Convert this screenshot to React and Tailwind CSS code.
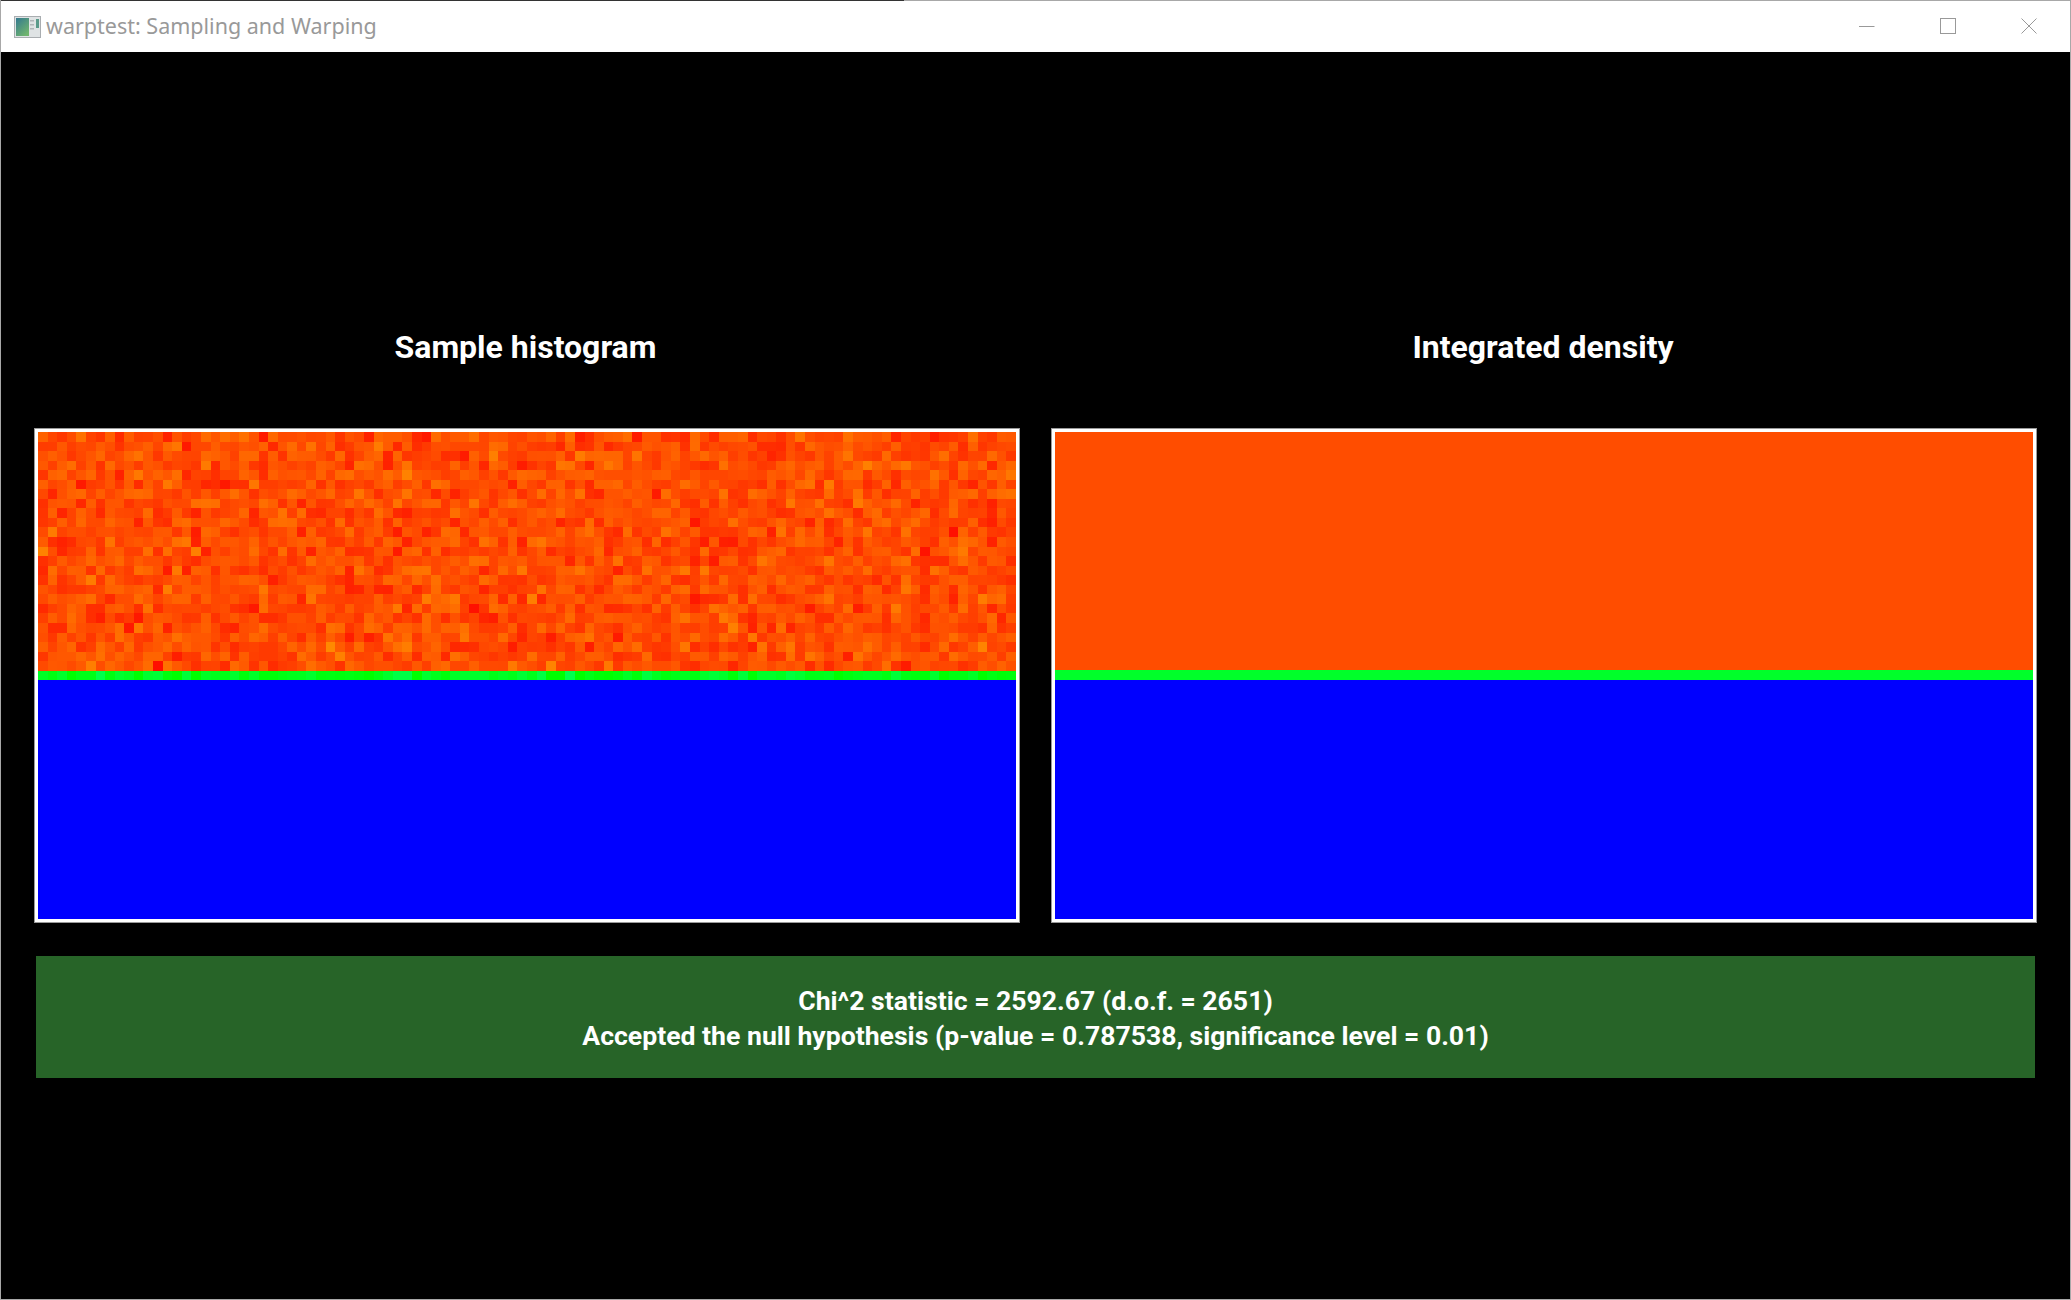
import React from "react";

const COLS = 102;
const ROWS = 25;

function mulberry(a) {
  return () => {
    a |= 0; a = (a + 0x6d2b79f5) | 0;
    let t = Math.imul(a ^ (a >>> 15), 1 | a);
    t = (t + Math.imul(t ^ (t >>> 7), 61 | t)) ^ t;
    return ((t ^ (t >>> 14)) >>> 0) / 4294967296;
  };
}

const rnd = mulberry(20714);
const gauss = () => (rnd() + rnd() + rnd() + rnd() - 2) * 1.73;
const cells = [];
for (let y = 0; y < ROWS; y++) {
  for (let x = 0; x < COLS; x++) {
    const g = Math.max(0, Math.min(140, Math.round(76 + gauss() * 21)));
    cells.push({ x, y, fill: `rgb(255,${g},0)` });
  }
}
const greens = [];
for (let x = 0; x < COLS; x++) {
  const b = Math.max(0, Math.round(30 + gauss() * 20));
  greens.push({ x, fill: `rgb(0,255,${b})` });
}

function Heatmap() {
  return (
    <svg viewBox={`0 0 ${COLS} 51`} preserveAspectRatio="none" className="block w-full h-full" shapeRendering="crispEdges">
      <rect x="0" y="0" width={COLS} height="51" fill="#0000ff" />
      {cells.map((c) => (
        <rect key={`${c.x}-${c.y}`} x={c.x} y={c.y} width="1.02" height="1.02" fill={c.fill} />
      ))}
      {greens.map((c) => (
        <rect key={c.x} x={c.x} y={25} width="1.02" height="1" fill={c.fill} />
      ))}
    </svg>
  );
}

function Frame({ children }) {
  return (
    <div className="border border-[#9a9a9a] w-[986px] h-[495px]">
      <div className="border-[3px] border-white w-full h-full">{children}</div>
    </div>
  );
}

function Density() {
  return (
    <div className="flex flex-col w-full h-full">
      <div className="h-[238px] bg-[#ff4d00]" />
      <div className="h-[10px] bg-[#00ff2a]" />
      <div className="flex-1 bg-[#0000ff]" />
    </div>
  );
}

function AppIcon() {
  return (
    <svg width="27" height="22" viewBox="0 0 27 22" className="shrink-0">
      <defs>
        <linearGradient id="g" x1="0" y1="0" x2="0.7" y2="1">
          <stop offset="0" stopColor="#33788f" />
          <stop offset="1" stopColor="#70b56e" />
        </linearGradient>
      </defs>
      <rect x="0.5" y="0.5" width="26" height="21" fill="#dfe3e4" stroke="#a9adb0" />
      <rect x="2" y="2" width="13" height="18" fill="url(#g)" />
      <rect x="16" y="4" width="4" height="1.5" fill="#b0b5b8" />
      <rect x="16" y="8" width="4" height="1.5" fill="#b0b5b8" />
      <rect x="16" y="12" width="4" height="1.5" fill="#b0b5b8" />
      <rect x="22" y="3" width="3" height="9" fill="#5a9a8a" />
    </svg>
  );
}

export default function App() {
  return (
    <div className="w-[2071px] h-[1300px] flex flex-col bg-black overflow-hidden border-x border-b border-x-[#a8a8a8] border-b-[#a8a8a8]">
      <div className="flex h-px shrink-0">
        <div className="w-[903px] bg-[#333333]" />
        <div className="flex-1 bg-[#a8a8a8]" />
      </div>
      <div className="h-[51px] shrink-0 bg-white flex items-center pl-[13px] relative">
        <AppIcon />
        <span className="ml-[5px] pb-[2px] text-[21.5px] text-[#999999] leading-none font-['Noto_Sans',sans-serif]">warptest: Sampling and Warping</span>
        <div className="ml-auto flex items-center -translate-y-px">
          <svg width="16" height="16" viewBox="0 0 16 16" className="mr-[65px]"><path d="M0 8.5H15.5" stroke="#999" fill="none" /></svg>
          <svg width="16" height="16" viewBox="0 0 16 16" className="mr-[65px]"><rect x="0.5" y="0.5" width="15" height="15" stroke="#999" fill="none" /></svg>
          <svg width="16" height="16" viewBox="0 0 16 16" className="mr-[33px]"><path d="M0.5 0.5L15.5 15.5M15.5 0.5L0.5 15.5" stroke="#999" fill="none" /></svg>
        </div>
      </div>
      <div className="flex-1 flex flex-col pl-[33px] pt-[275px] font-['Roboto',sans-serif] font-bold text-white">
        <div className="flex gap-[31px] mb-[61px]">
          <div className="w-[986px] h-10 flex items-center justify-center pr-[3px] text-[32px] leading-none">Sample histogram</div>
          <div className="w-[986px] h-10 flex items-center justify-center pr-[2px] text-[32px] leading-none">Integrated density</div>
        </div>
        <div className="flex gap-[31px]">
          <Frame><Heatmap /></Frame>
          <Frame><Density /></Frame>
        </div>
        <div className="ml-[2px] mt-[33px] w-[1999px] h-[122px] bg-[#276428] flex flex-col items-center justify-center text-[26.6px] leading-[35px] pt-[2px]">
          <div>Chi^2 statistic = 2592.67 (d.o.f. = 2651)</div>
          <div>Accepted the null hypothesis (p-value = 0.787538, significance level = 0.01)</div>
        </div>
      </div>
    </div>
  );
}
